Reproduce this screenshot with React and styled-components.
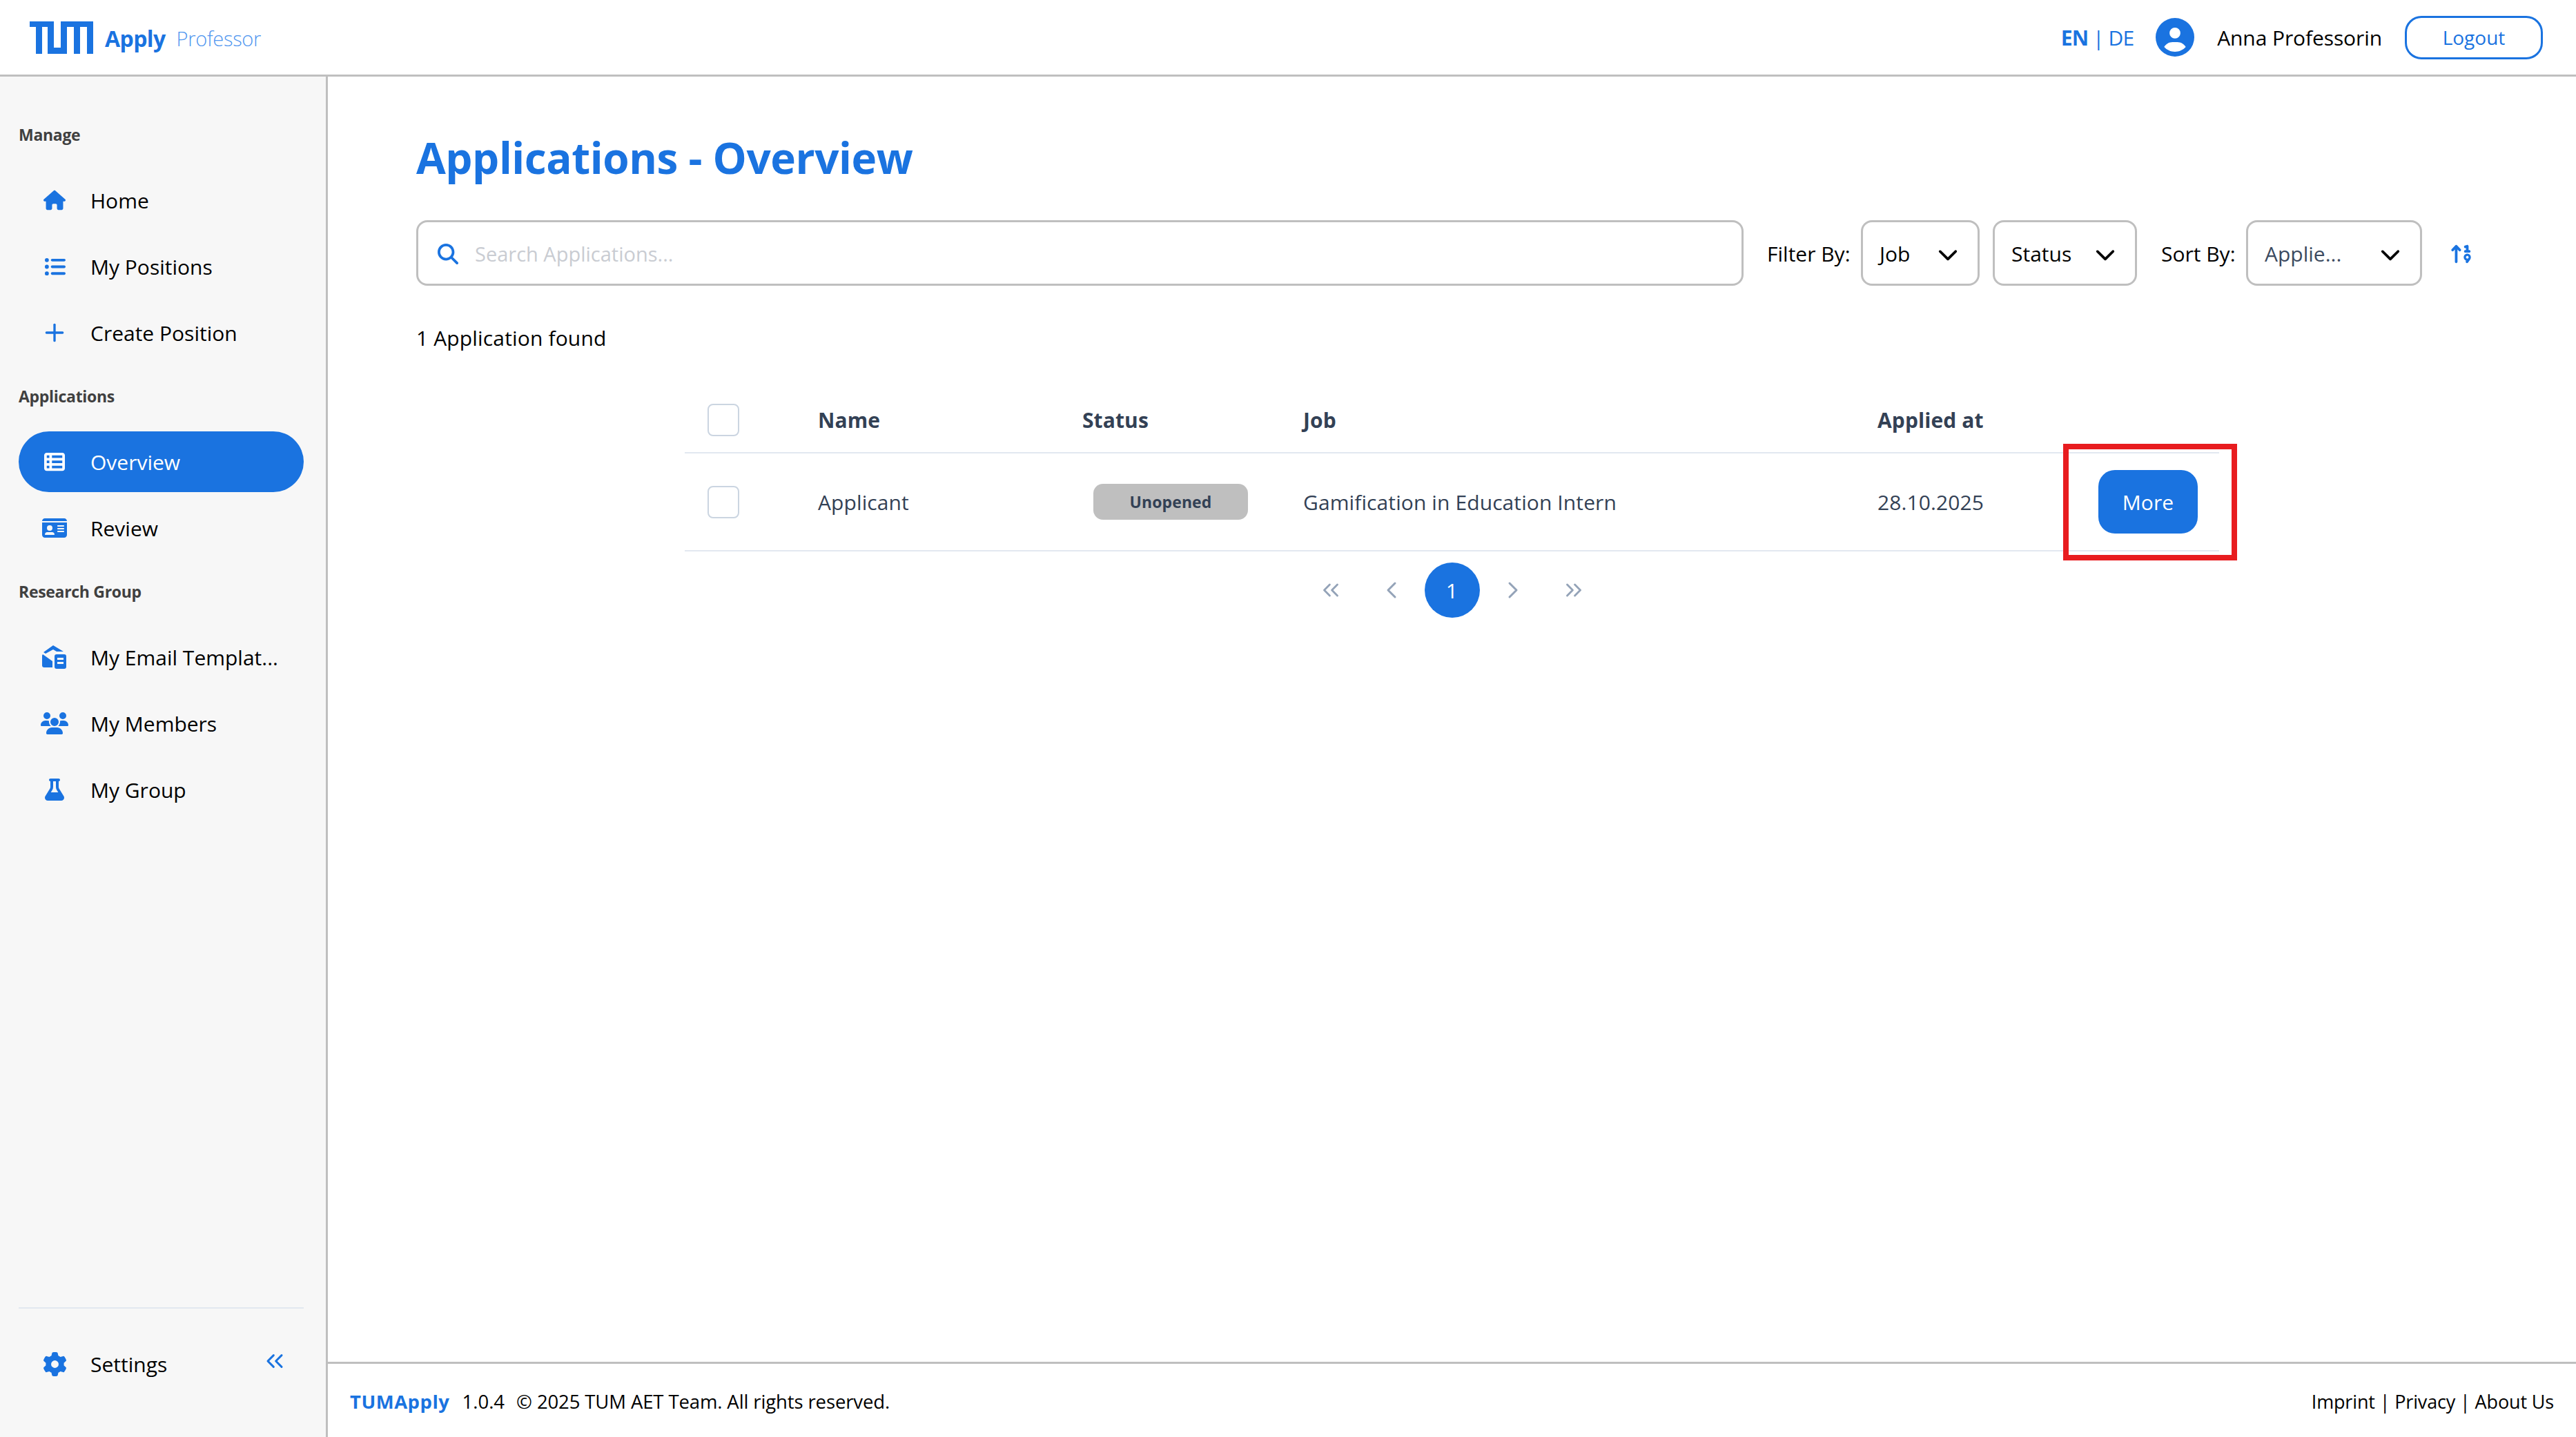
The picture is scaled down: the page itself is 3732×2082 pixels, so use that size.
import React from 'react'
import styled, { createGlobalStyle } from 'styled-components'
import {
  FaHouse, FaListUl, FaTableList, FaIdCard, FaUsers, FaFlask,
  FaGear, FaCircleUser, FaMagnifyingGlass, FaArrowUp19, FaChevronDown,
} from 'react-icons/fa6'
import { Plus, ChevronsLeft, ChevronsRight, ChevronLeft, ChevronRight } from 'lucide-react'

const BLUE = '#1a73e0'
const LINE = '#bfbfbf'
const SLATE = '#334155'

const GlobalStyle = createGlobalStyle`
  html, body { margin: 0; padding: 0; background: #fff; }
  body { font-family: "Open Sans", "Noto Sans", sans-serif; color: #000; }
  * { box-sizing: border-box; }
`

// --- Logo ---
const TumLogo = () => (
  <svg width="92" height="47" viewBox="0 0 92 47" style={{ flexShrink: 0 }}>
    <path
      fill={BLUE}
      d="M0 0H35V47H26V8H18V47H9V8H0Z M26 38H54V47H26Z M45 0H92V47H83V8H73V47H64V8H54V47H45Z"
    />
  </svg>
)

// --- Icons ---
const EmailTemplateIcon = () => (
  <svg width="36" height="36" viewBox="0 0 36 36" fill="currentColor">
    <path d="M16 1L31 10H21L16 7L5 13L2 11Z" />
    <path d="M1 14L15 24V33H3Q0 33 0 30V16Q0 15 1 14Z" />
    <path
      fillRule="evenodd"
      d="M21 14H32Q35 14 35 17V32Q35 35 32 35H21Q18 35 18 32V17Q18 14 21 14ZM22 19V22H31V19ZM22 25V28H31V25Z"
    />
  </svg>
)

// --- Data ---
const sections = [
  {
    title: 'Manage',
    items: [
      { label: 'Home', icon: <FaHouse size={32} /> },
      { label: 'My Positions', icon: <FaListUl size={31} /> },
      { label: 'Create Position', icon: <Plus size={44} strokeWidth={2} /> },
    ],
  },
  {
    title: 'Applications',
    items: [
      { label: 'Overview', icon: <FaTableList size={30} />, active: true },
      { label: 'Review', icon: <FaIdCard size={36} /> },
    ],
  },
  {
    title: 'Research Group',
    items: [
      { label: 'My Email Templat...', icon: <EmailTemplateIcon /> },
      { label: 'My Members', icon: <FaUsers size={40} /> },
      { label: 'My Group', icon: <FaFlask size={32} /> },
    ],
  },
]

const App = () => {
  return (
    <Page>
      <GlobalStyle />
      <Header>
        <Brand>
          <TumLogo />
          <BrandName>Apply</BrandName>
          <BrandRole>Professor</BrandRole>
        </Brand>
        <HeaderRight>
          <Lang><b>EN</b> | DE</Lang>
          <FaCircleUser size={56} color={BLUE} />
          <UserName>Anna Professorin</UserName>
          <LogoutButton>Logout</LogoutButton>
        </HeaderRight>
      </Header>

      <Body>
        <Sidebar>
          {sections.map(section => (
            <Section key={section.title}>
              <SectionTitle>{section.title}</SectionTitle>
              {section.items.map(item => (
                <NavItem key={item.label} $active={item.active}>
                  <NavIcon $active={item.active}>{item.icon}</NavIcon>
                  {item.label}
                </NavItem>
              ))}
            </Section>
          ))}
          <SidebarBottom>
            <NavItem>
              <NavIcon><FaGear size={35} /></NavIcon>
              Settings
              <Collapse><ChevronsLeft size={40} strokeWidth={1.8} /></Collapse>
            </NavItem>
          </SidebarBottom>
        </Sidebar>

        <Column>
          <Main>
            <Title>Applications - Overview</Title>
            <Toolbar>
              <Search>
                <FaMagnifyingGlass size={30} color={BLUE} />
                <Placeholder>Search Applications...</Placeholder>
              </Search>
              <ToolLabel $left={34} $w={120}>Filter By:</ToolLabel>
              <Select $w={172}>Job<Chevron><FaChevronDown size={30} /></Chevron></Select>
              <Select $w={209} $left={19}>Status<Chevron><FaChevronDown size={30} /></Chevron></Select>
              <ToolLabel $left={35} $w={107}>Sort By:</ToolLabel>
              <Select $w={255} $muted>Applie...<Chevron><FaChevronDown size={30} /></Chevron></Select>
              <SortButton><FaArrowUp19 size={34} color={BLUE} /></SortButton>
            </Toolbar>
            <Found>1 Application found</Found>

            <Table>
              <HeadRow>
                <Cell><Checkbox /></Cell>
                <Cell>Name</Cell>
                <Cell>Status</Cell>
                <Cell>Job</Cell>
                <Cell>Applied at</Cell>
                <Cell />
              </HeadRow>
              <DataRow>
                <Cell><Checkbox /></Cell>
                <Cell>Applicant</Cell>
                <Cell><Badge>Unopened</Badge></Cell>
                <Cell>Gamification in Education Intern</Cell>
                <Cell>28.10.2025</Cell>
                <Cell>
                  <MoreButton>
                    More
                    <Highlight />
                  </MoreButton>
                </Cell>
              </DataRow>
              <Pagination>
                <PageButton><ChevronsLeft size={38} strokeWidth={1.8} /></PageButton>
                <PageButton><ChevronLeft size={40} strokeWidth={1.8} /></PageButton>
                <PageButton $active>1</PageButton>
                <PageButton><ChevronRight size={40} strokeWidth={1.8} /></PageButton>
                <PageButton><ChevronsRight size={38} strokeWidth={1.8} /></PageButton>
              </Pagination>
            </Table>
          </Main>

          <Footer>
            <FooterLeft>
              <FooterBrand>TUMApply</FooterBrand>
              <span>1.0.4</span>
              <FooterNote>© 2025 TUM AET Team. All rights reserved.</FooterNote>
            </FooterLeft>
            <FooterLinks>Imprint | Privacy | About Us</FooterLinks>
          </Footer>
        </Column>
      </Body>
    </Page>
  )
}

export default App

// --- Styles ---
const Page = styled.div`
  display: flex;
  flex-direction: column;
  width: 3732px;
  height: 2082px;
  overflow: hidden;
`

const Header = styled.header`
  display: flex;
  align-items: center;
  justify-content: space-between;
  flex: 0 0 111px;
  padding: 0 48px 0 43px;
  border-bottom: 3px solid ${LINE};
`

const Brand = styled.div`
  display: flex;
  align-items: flex-end;
  color: ${BLUE};
`

const BrandName = styled.span`
  margin: 0 16px 0 17px;
  font-size: 32px;
  font-weight: 700;
  line-height: 44px;
  letter-spacing: -0.6px;
`

const BrandRole = styled.span`
  font-size: 29px;
  font-weight: 300;
  line-height: 44px;
  letter-spacing: -0.3px;
  color: #4f96ef;
`

const HeaderRight = styled.div`
  display: flex;
  align-items: center;
`

const Lang = styled.span`
  margin-right: 32px;
  font-size: 30px;
  color: ${BLUE};
  letter-spacing: -0.9px;
  b { font-weight: 700; }
`

const UserName = styled.span`
  margin: 0 33px 0 33px;
  font-size: 30px;
  letter-spacing: -0.1px;
`

const LogoutButton = styled.button`
  width: 200px;
  height: 63px;
  border: 3px solid ${BLUE};
  border-radius: 24px;
  background: #fff;
  color: ${BLUE};
  font-family: inherit;
  font-size: 28px;
`

const Body = styled.div`
  display: flex;
  flex: 1;
  min-height: 0;
`

const Sidebar = styled.aside`
  display: flex;
  flex-direction: column;
  flex: 0 0 475px;
  padding: 68px 32px 62px 27px;
  background: #f7f7f7;
  border-right: 3px solid ${LINE};
`

const Section = styled.section`
  display: flex;
  flex-direction: column;
  gap: 8px;
  margin-bottom: 32px;
`

const SectionTitle = styled.h3`
  height: 32px;
  margin: 0 0 27px;
  font-size: 23px;
  font-weight: 700;
  line-height: 32px;
  color: #404040;
  letter-spacing: -0.3px;
`

const NavItem = styled.div`
  position: relative;
  display: flex;
  align-items: center;
  height: 88px;
  border-radius: 44px;
  font-size: 30px;
  white-space: nowrap;
  background: ${p => (p.$active ? BLUE : 'transparent')};
  color: ${p => (p.$active ? '#fff' : '#000')};
`

const NavIcon = styled.span`
  display: flex;
  align-items: center;
  justify-content: center;
  width: 40px;
  margin: 0 32px;
  color: ${p => (p.$active ? '#fff' : BLUE)};
`

const SidebarBottom = styled.div`
  margin-top: auto;
  padding-top: 36px;
  border-top: 2px solid #e2e8f0;
`

const Collapse = styled.span`
  display: flex;
  margin-left: auto;
  margin-top: -8px;
  margin-right: 22px;
  color: ${BLUE};
`

const Column = styled.div`
  display: flex;
  flex-direction: column;
  flex: 1;
  min-width: 0;
`

const Main = styled.main`
  flex: 1;
  padding: 72px 128px 0;
`

const Title = styled.h1`
  margin: 0 0 46px;
  font-size: 62px;
  font-weight: 700;
  line-height: 90px;
  letter-spacing: -0.45px;
  color: ${BLUE};
`

const Toolbar = styled.div`
  display: flex;
  align-items: center;
  gap: 16px;
  font-size: 30px;
  line-height: 44px;
`

const Search = styled.div`
  display: flex;
  align-items: center;
  gap: 24px;
  flex: 1;
  height: 95px;
  padding: 2px 0 0 28px;
  border: 3px solid ${LINE};
  border-radius: 16px;
`

const Placeholder = styled.span`
  font-size: 29px;
  color: #c9ccd2;
`

const ToolLabel = styled.span`
  width: ${p => p.$w}px;
  margin-top: 3px;
  margin-left: ${p => p.$left - 16}px;
  white-space: nowrap;
`

const Select = styled.div`
  display: flex;
  align-items: center;
  justify-content: space-between;
  width: ${p => p.$w}px;
  height: 95px;
  margin-left: ${p => (p.$left ? p.$left - 16 : 0)}px;
  padding: 3px 28px 0 24px;
  border: 3px solid ${LINE};
  border-radius: 16px;
  color: ${p => (p.$muted ? '#3b4a60' : '#000')};
`

const Chevron = styled.span`
  display: flex;
  color: #000;
`

const SortButton = styled.span`
  display: flex;
  width: 55px;
  margin-top: 3px;
  margin-left: 24px;
`

const Found = styled.div`
  margin: 54px 0 0;
  font-size: 30px;
  line-height: 44px;
  letter-spacing: 0.15px;
`

const Table = styled.div`
  width: 2223px;
  margin: 49px auto 0;
  font-size: 30px;
  letter-spacing: 0.1px;
  color: ${SLATE};
`

const Row = styled.div`
  display: grid;
  grid-template-columns: 193px 383px 320px 832px 320px 175px;
  align-items: center;
  border-bottom: 2px solid #e2e8f0;
`

const HeadRow = styled(Row)`
  height: 96px;
  font-weight: 700;
`

const DataRow = styled(Row)`
  height: 142px;
`

const Cell = styled.div`
  min-width: 0;
  white-space: nowrap;
`

const Checkbox = styled.span`
  display: block;
  width: 46px;
  height: 47px;
  margin-left: 33px;
  border: 2px solid #cbd5e1;
  border-radius: 8px;
  background: #fff;
`

const Badge = styled.span`
  display: inline-flex;
  align-items: center;
  justify-content: center;
  width: 224px;
  height: 52px;
  margin-left: 16px;
  border-radius: 14px;
  background: ${LINE};
  font-size: 23px;
  font-weight: 700;
`

const MoreButton = styled.span`
  position: relative;
  display: flex;
  align-items: center;
  justify-content: center;
  width: 144px;
  height: 92px;
  border-radius: 24px;
  background: ${BLUE};
  color: #fff;
`

const Highlight = styled.span`
  position: absolute;
  inset: -38px -57px -39px -51px;
  border: 8px solid #e81c1f;
  pointer-events: none;
`

const Pagination = styled.nav`
  display: flex;
  justify-content: center;
  gap: 8px;
  margin-top: 16px;
`

const PageButton = styled.span`
  display: flex;
  align-items: center;
  justify-content: center;
  width: 80px;
  height: 80px;
  border-radius: 50%;
  background: ${p => (p.$active ? BLUE : 'transparent')};
  color: ${p => (p.$active ? '#fff' : '#94a3b8')};
`

const Footer = styled.footer`
  display: flex;
  align-items: center;
  justify-content: space-between;
  flex: 0 0 109px;
  padding: 2px 32px 0;
  border-top: 3px solid ${LINE};
  font-size: 27.5px;
`

const FooterLeft = styled.div`
  display: flex;
  gap: 18px;
`

const FooterBrand = styled.span`
  font-weight: 700;
  letter-spacing: 0.5px;
  color: ${BLUE};
`

const FooterNote = styled.span`
  margin-left: -1px;
  letter-spacing: -0.12px;
`

const FooterLinks = styled.span`
  font-size: 27px;
  letter-spacing: -0.15px;
`
